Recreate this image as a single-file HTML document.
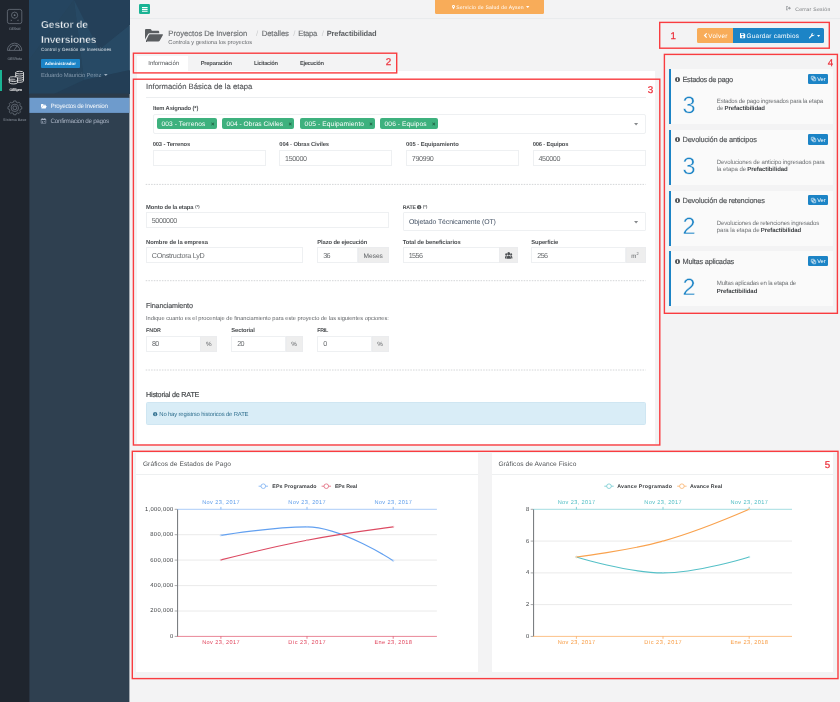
<!DOCTYPE html>
<html lang="es">
<head>
<meta charset="utf-8">
<title>Gestor de Inversiones</title>
<style>
*{box-sizing:border-box;margin:0;padding:0}
html,body{width:840px;height:702px;overflow:hidden}
body{text-rendering:geometricPrecision;font-family:"Liberation Sans",sans-serif;background:#f3f3f4;color:#676a6c;position:relative;font-size:6px;line-height:1}
.a{position:absolute}
.t{position:absolute;white-space:nowrap;line-height:1}
.rb{position:absolute;border:1px solid #ee3a43;border-radius:1px}
.inp{position:absolute;background:#fff;border:1px solid #eef0f2}
.add{position:absolute;background:#eeeeee;border:1px solid #ebecee}
.dash{position:absolute;height:0;border-top:1px dashed #e4e6e8}
.tag{position:absolute;background:#3eb17e;border-radius:2px}
svg{position:absolute;overflow:visible}
</style>
</head>
<body>
<div id="w" style="position:absolute;left:0;top:0;width:840px;height:702px;will-change:transform">
<svg style="left:0;top:0" width="131" height="702" viewBox="0 0 131 702"><rect x="29" y="0" width="100.400" height="702" fill="#2f4050"/><rect x="0" y="0" width="29.400" height="702" fill="#1f252e"/></svg>
<div class="a" style="left:0.00px;top:70.00px;width:2.00px;height:21.00px;background:#1ab394;"></div>
<svg style="left:0;top:0" width="30" height="130" viewBox="0 0 30 130" fill="none" stroke="#6f7781" stroke-width="0.75">
<rect x="7.4" y="9.4" width="14.4" height="14.2" rx="2"/>
<circle cx="14.6" cy="15.2" r="3.1"/><circle cx="14.6" cy="15.2" r="0.9" fill="#6f7781" stroke="none"/>
<path d="M10.8 19.4l1.3 .9-1.3 .9zM18.4 19.4l-1.3 .9 1.3 .9z" fill="#6f7781" stroke="none"/>
<!-- gauge -->
<path d="M7.4 50.4a7.2 7.2 0 0 1 14.4 0zM9.400 50.400a5.2 5.2 0 0 1 10.400 0M14.300 49.800l3.300-4.600" />
<path d="M10.4 46.2l.8 .9M12.6 44.6l.4 1M16.4 44.6l-.3 1M19 46.6l-.9 .8" stroke-width="0.55"/>
<!-- gear -->
<circle cx="14.85" cy="107.85" r="1.9"/><circle cx="14.85" cy="107.85" r="3.7"/>
<path d="M13.54 102.20L13.70 100.94L16.00 100.94L16.16 102.20L17.92 102.93L18.92 102.15L20.55 103.78L19.77 104.78L20.50 106.54L21.76 106.70L21.76 109.00L20.50 109.16L19.77 110.92L20.55 111.92L18.92 113.55L17.92 112.77L16.16 113.50L16.00 114.76L13.70 114.76L13.54 113.50L11.78 112.77L10.78 113.55L9.15 111.92L9.93 110.92L9.20 109.16L7.94 109.00L7.94 106.70L9.20 106.54L9.93 104.78L9.15 103.78L10.78 102.15L11.78 102.93z" stroke-width="0.7" stroke-linejoin="round"/>
</svg>
<svg style="left:0;top:0" width="30" height="130" viewBox="0 0 30 130" fill="none" stroke="#f4f4f4" stroke-width="0.8">
<ellipse cx="19.6" cy="72.6" rx="3.9" ry="1.3"/>
<path d="M15.7 72.6v8.4c0 .7 1.7 1.3 3.9 1.3s3.9-.6 3.9-1.3v-8.4M15.7 74.7c0 .7 1.7 1.3 3.9 1.3s3.9-.6 3.9-1.3M15.7 76.8c0 .7 1.7 1.3 3.9 1.3s3.9-.6 3.9-1.3M15.7 78.9c0 .7 1.7 1.3 3.9 1.3s3.9-.6 3.9-1.3"/>
<ellipse cx="13.4" cy="78" rx="4.1" ry="1.3" fill="#1f252e"/>
<path d="M9.3 78v4.6c0 .7 1.8 1.3 4.1 1.3s4.1-.6 4.1-1.3V78" fill="#1f252e"/>
<path d="M9.3 80.2c0 .7 1.8 1.3 4.1 1.3s4.1-.6 4.1-1.3"/>
<ellipse cx="11.8" cy="79.6" rx="3.6" ry="1.1" fill="#e8e8e8" stroke="none" opacity=".55"/>
</svg>
<div class="t" style="left:9.00px;top:28.00px;font-size:3.7px;color:#6f7781;letter-spacing:-0.332px;font-weight:bold;">GESsid</div>
<div class="t" style="left:7.45px;top:58.00px;font-size:3.7px;color:#6f7781;letter-spacing:-0.239px;font-weight:bold;">GESRota</div>
<div class="t" style="left:9.60px;top:89.00px;font-size:3.7px;color:#ffffff;letter-spacing:-0.275px;font-weight:bold;">GESpro</div>
<div class="t" style="left:3.00px;top:119.00px;font-size:3.7px;color:#6f7781;letter-spacing:-0.051px;font-weight:bold;">Sistema Base</div>
<div class="a" style="left:0;top:0;width:131px;height:99px">
<svg style="left:29.400px;top:0" width="100" height="93.6" viewBox="0 0 100 93.600"><rect x="0" y="0" width="100" height="93.600" fill="#26445c"/>
<polygon points="0,0 45,0 0,60" fill="#254560"/>
<polygon points="45,0 101,0 101,25 70,50" fill="#244059"/>
<polygon points="45,0 70,50 101,25 101,70 55,80" fill="#284b67" opacity=".8"/>
<polygon points="0,60 45,0 55,80 25,94 0,94" fill="#25445d"/>
<polygon points="55,80 101,70 101,94 25,94" fill="#233e56"/>
</svg></div>
<svg style="left:0;top:0" width="131" height="114" viewBox="0 0 131 114"><rect x="29.400" y="93.600" width="100" height="4.400" fill="#2b3b4a"/><rect x="29.400" y="97.800" width="100" height="15.100" fill="#6e9bcc"/></svg>
<div class="t" style="left:41.00px;top:21.00px;font-size:10.2px;color:#e9edf1;letter-spacing:-0.077px;font-weight:bold;-webkit-text-stroke:.3px #25455e;">Gestor de</div>
<div class="t" style="left:41.00px;top:36.00px;font-size:10.2px;color:#e9edf1;letter-spacing:-0.119px;font-weight:bold;-webkit-text-stroke:.3px #25455e;">Inversiones</div>
<div class="t" style="left:41.00px;top:48.00px;font-size:4.6px;color:#dde4ea;letter-spacing:0.121px;">Control y Gestión de Inversiones</div>
<div class="a" style="left:41.00px;top:59.00px;width:39.00px;height:9.00px;background:#1c84c6;border-radius:1px"></div>
<div class="t" style="left:44.80px;top:62.00px;font-size:4.4px;color:#ffffff;letter-spacing:0.094px;font-weight:bold;">Administrador</div>
<div class="t" style="left:41.00px;top:74.00px;font-size:5.9px;color:#8197ab;letter-spacing:-0.133px;">Eduardo Mauricio Perez</div>
<svg style="left:103.6px;top:74px" width="4" height="2.4" viewBox="0 0 4 2.4"><path d="M0 0h3.6L1.8 2z" fill="#9fb0c0"/></svg>
<svg style="left:41px;top:103.6px" width="6" height="5" viewBox="0 0 6 5"><path d="M0 .6c0-.3.2-.6.6-.6h1.4l.6.7h1.9c.3 0 .5.2.5.5v.5H1.6L0 4.2z" fill="#fff"/><path d="M1.7 2.1h4.1L4.6 4.6H.4z" fill="#fff"/></svg>
<svg style="left:41.2px;top:117.8px" width="5" height="5.6" viewBox="0 0 5 5.6"><path d="M.2 1h4.6v4.3H.2z" fill="none" stroke="#a7b1c2" stroke-width=".55"/><path d="M.2 1h4.6v1H.2z" fill="#a7b1c2"/><path d="M1.3 0v1.4M3.7 0v1.4" stroke="#a7b1c2" stroke-width=".6"/><path d="M1.2 3h.8v.7h-.8zM2.9 3h.8v.7h-.8zM1.2 4.1h.8v.6h-.8z" fill="#a7b1c2"/></svg>
<div class="t" style="left:50.60px;top:104.00px;font-size:6.3px;color:#f2f6fa;letter-spacing:-0.314px;">Proyectos de Inversion</div>
<div class="t" style="left:50.60px;top:119.00px;font-size:6.3px;color:#a7b1c2;letter-spacing:-0.314px;">Confirmacion de pagos</div>
<div class="a" style="left:130.00px;top:18.00px;width:710.00px;height:1.00px;background:#e9ebed;"></div>
<div class="a" style="left:138.60px;top:4.00px;width:11.80px;height:10.00px;background:#1ab394;border-radius:1.3px"></div>
<svg style="left:141.7px;top:6.6px" width="5.6" height="4.8" viewBox="0 0 5.6 4.8"><path d="M0 0h5.6v1.1H0zM0 1.85h5.6v1.1H0zM0 3.7h5.6v1.1H0z" fill="#fff"/></svg>
<div class="a" style="left:435.00px;top:0.00px;width:109.00px;height:13.50px;background:#f8ac59;border-radius:0 0 1.5px 1.5px"></div>
<svg style="left:451.8px;top:5px" width="3" height="4.4" viewBox="0 0 3 4.4"><path d="M1.5 0a1.5 1.5 0 0 1 1.5 1.5c0 1-1.5 2.9-1.5 2.9S0 2.500 0 1.5A1.5 1.5 0 0 1 1.500 0zm0 .9a.6.6 0 1 0 0 1.2.6.6 0 0 0 0-1.200z" fill="#fff"/></svg>
<div class="t" style="left:456.20px;top:6.00px;font-size:5.1px;color:#ffffff;letter-spacing:0.220px;">Servicio de Salud de Aysen</div>
<svg style="left:525.8px;top:6.3px" width="3.4" height="2" viewBox="0 0 3.4 2"><path d="M0 0h3.4L1.7 2z" fill="#fff"/></svg>
<svg style="left:785.6px;top:6.3px" width="5" height="4.400" viewBox="0 0 5 4.4"><path d="M0 .2h2v.7H.7v2.600H2v.7H0z" fill="#9a9da0"/><path d="M1.600 1.600h1.500V.6L5 2.200 3.100 3.800V2.800H1.600z" fill="#9a9da0"/></svg>
<div class="t" style="left:795.20px;top:8.00px;font-size:5.1px;color:#74777a;letter-spacing:0.311px;">Cerrar Sesión</div>
<svg style="left:145px;top:29.2px" width="18" height="12.6" viewBox="0 0 18 12.6"><path d="M0 1.300C0 .5.500 0 1.300 0h3.900c.5 0 .9.300 1.100.7l.5 1h6.100c.8 0 1.300.5 1.300 1.300v1.200H4.600c-.7 0-1.200.3-1.500.9L0 10.500z" fill="#5a5d60"/><path d="M4.800 5.300h12.500c.6 0 .8.400.5.900l-3.100 5.500c-.3.500-.8.800-1.400.8H1.600c-.6 0-.8-.4-.5-.9l2.700-5.500c.2-.5.500-.800 1-.800z" fill="#5a5d60"/></svg>
<div class="t" style="left:168.30px;top:30.00px;font-size:7.7px;color:#6c6f72;letter-spacing:-0.029px;-webkit-text-stroke:.15px #6c6f72;">Proyectos De Inversion</div>
<div class="t" style="left:256.00px;top:30.00px;font-size:7.7px;color:#c9cbcd;">/</div>
<div class="t" style="left:261.70px;top:30.00px;font-size:7.7px;color:#6c6f72;letter-spacing:-0.074px;-webkit-text-stroke:.15px #6c6f72;">Detalles</div>
<div class="t" style="left:293.30px;top:30.00px;font-size:7.7px;color:#c9cbcd;">/</div>
<div class="t" style="left:298.30px;top:30.00px;font-size:7.7px;color:#6c6f72;letter-spacing:-0.281px;-webkit-text-stroke:.15px #6c6f72;">Etapa</div>
<div class="t" style="left:321.70px;top:30.00px;font-size:7.7px;color:#c9cbcd;">/</div>
<div class="t" style="left:326.70px;top:30.00px;font-size:7.5px;color:#5d6063;letter-spacing:-0.120px;font-weight:bold;">Prefactibilidad</div>
<div class="t" style="left:168.30px;top:41.00px;font-size:5.7px;color:#686b6e;letter-spacing:-0.009px;">Controla y gestiona los proyectos</div>
<div class="t" style="left:670.57px;top:32.00px;font-size:9.8px;color:#ec2f3a;-webkit-text-stroke:.25px #ec2f3a;">1</div>
<div class="a" style="left:697.00px;top:27.80px;width:36.30px;height:15.20px;background:#f8ac59;border-radius:1.5px 0 0 1.5px"></div>
<div class="a" style="left:733.30px;top:27.80px;width:91.00px;height:15.20px;background:#1c84c6;border-radius:0 1.5px 1.5px 0"></div>
<svg style="left:703.6px;top:33px" width="3.200" height="5" viewBox="0 0 3.2 5"><path d="M2.700.3L.6 2.500l2.100 2.200" fill="none" stroke="#fff" stroke-width="1.25"/></svg>
<div class="t" style="left:708.30px;top:34.00px;font-size:6.3px;color:#ffffff;letter-spacing:0.298px;">Volver</div>
<svg style="left:739.6px;top:33px" width="5.200" height="5.2" viewBox="0 0 5.2 5.2"><path d="M0 .5C0 .2.200 0 .5 0h3.400l1.300 1.300v3.400c0 .3-.2.500-.5.500H.5c-.3 0-.5-.2-.5-.5zM1 .6v1.500h2.600V.6zM2.600 2.800a.95.950 0 1 0 0 1.900.95.950 0 0 0 0-1.900z" fill="#fff" fill-rule="evenodd"/></svg>
<div class="t" style="left:746.60px;top:34.00px;font-size:6.4px;color:#ffffff;letter-spacing:0.244px;">Guardar cambios</div>
<svg style="left:808.6px;top:32.8px" width="5.600" height="5.600" viewBox="0 0 5.6 5.6"><path d="M5.400 1.200a1.700 1.700 0 0 1-2.300 1.900L.9 5.300a.55.550 0 0 1-.8-.8l2.200-2.200A1.700 1.700 0 0 1 4.300.1L3.300 1.100l.3.900.9.300z" fill="#fff"/></svg>
<svg style="left:816.6px;top:34.8px" width="3.200" height="1.900" viewBox="0 0 3.2 1.9"><path d="M0 0h3.200L1.600 1.900z" fill="#fff"/></svg>
<div class="a" style="left:137.00px;top:55.70px;width:51.00px;height:15.20px;background:#ffffff;"></div>
<div class="t" style="left:148.30px;top:61.00px;font-size:6.0px;color:#505356;letter-spacing:-0.065px;">Información</div>
<div class="t" style="left:200.70px;top:62.00px;font-size:5.8px;color:#4d5053;letter-spacing:-0.223px;font-weight:bold;">Preparación</div>
<div class="t" style="left:254.00px;top:62.00px;font-size:5.8px;color:#4d5053;letter-spacing:-0.341px;font-weight:bold;">Licitación</div>
<div class="t" style="left:300.00px;top:62.00px;font-size:5.8px;color:#4d5053;letter-spacing:-0.425px;font-weight:bold;">Ejecución</div>
<div class="t" style="left:385.77px;top:58.00px;font-size:9.8px;color:#ec2f3a;-webkit-text-stroke:.25px #ec2f3a;">2</div>
<div class="a" style="left:137.00px;top:71.00px;width:518.30px;height:372.50px;background:#ffffff;"></div>
<div class="t" style="left:647.87px;top:86.00px;font-size:9.8px;color:#ec2f3a;-webkit-text-stroke:.25px #ec2f3a;">3</div>
<div class="t" style="left:146.00px;top:83.00px;font-size:7.7px;color:#505356;letter-spacing:0.027px;-webkit-text-stroke:.12px #505356;">Información Básica de la etapa</div>
<div class="a" style="left:146.00px;top:97.00px;width:499.70px;height:1.00px;background:#eceef0;"></div>
<div class="t" style="left:152.90px;top:107.00px;font-size:5.8px;color:#4a4d50;letter-spacing:-0.124px;font-weight:bold;">Item Asignado (*)</div>
<div class="inp" style="left:152.700px;top:114px;width:493px;height:20px;border-radius:2px"></div>
<div class="tag" style="left:156.90px;top:118.00px;width:60.00px;height:11.00px;"></div>
<div class="t" style="left:161.50px;top:122.00px;font-size:6.6px;color:#ffffff;letter-spacing:0.105px;">003 - Terrenos</div>
<div class="t" style="left:211.10px;top:122.00px;font-size:6px;color:#1f5a40;font-weight:bold;">×</div>
<div class="tag" style="left:222.00px;top:118.00px;width:72.30px;height:11.00px;"></div>
<div class="t" style="left:226.60px;top:122.00px;font-size:6.6px;color:#ffffff;letter-spacing:0.021px;">004 - Obras Civiles</div>
<div class="t" style="left:288.50px;top:122.00px;font-size:6px;color:#1f5a40;font-weight:bold;">×</div>
<div class="tag" style="left:300.00px;top:118.00px;width:75.00px;height:11.00px;"></div>
<div class="t" style="left:304.60px;top:122.00px;font-size:6.6px;color:#ffffff;letter-spacing:0.133px;">005 - Equipamiento</div>
<div class="t" style="left:369.20px;top:122.00px;font-size:6px;color:#1f5a40;font-weight:bold;">×</div>
<div class="tag" style="left:380.00px;top:118.00px;width:57.70px;height:11.00px;"></div>
<div class="t" style="left:384.60px;top:122.00px;font-size:6.6px;color:#ffffff;letter-spacing:0.106px;">006 - Equipos</div>
<div class="t" style="left:431.90px;top:122.00px;font-size:6px;color:#1f5a40;font-weight:bold;">×</div>
<svg style="left:634.3px;top:122.6px" width="4.200" height="2.400" viewBox="0 0 3.6 2.1"><path d="M0 0h3.600L1.800 2.100z" fill="#85888b"/></svg>
<div class="t" style="left:152.70px;top:143.00px;font-size:5.8px;color:#4a4d50;letter-spacing:-0.132px;font-weight:bold;">003 - Terrenos</div>
<div class="inp" style="left:152.7px;top:150px;width:113px;height:16px"></div>
<div class="t" style="left:279.30px;top:143.00px;font-size:5.8px;color:#4a4d50;letter-spacing:-0.123px;font-weight:bold;">004 - Obras Civiles</div>
<div class="inp" style="left:279.3px;top:150px;width:113px;height:16px"></div>
<div class="t" style="left:285.10px;top:155.00px;font-size:7.2px;color:#686b6e;letter-spacing:-0.405px;">150000</div>
<div class="t" style="left:406.00px;top:143.00px;font-size:5.8px;color:#4a4d50;letter-spacing:-0.028px;font-weight:bold;">005 - Equipamiento</div>
<div class="inp" style="left:406px;top:150px;width:113px;height:16px"></div>
<div class="t" style="left:411.80px;top:155.00px;font-size:7.2px;color:#686b6e;letter-spacing:-0.405px;">790990</div>
<div class="t" style="left:532.70px;top:143.00px;font-size:5.8px;color:#4a4d50;letter-spacing:-0.167px;font-weight:bold;">006 - Equipos</div>
<div class="inp" style="left:532.7px;top:150px;width:113px;height:16px"></div>
<div class="t" style="left:538.50px;top:155.00px;font-size:7.2px;color:#686b6e;letter-spacing:-0.405px;">450000</div>
<svg style="left:0;top:0" width="840" height="702" viewBox="0 0 840 702"><path d="M145.7 184.4H645.7" stroke="#d4d6d8" stroke-width="1" stroke-dasharray="1.55 1.15" fill="none"/></svg>
<div class="t" style="left:146.00px;top:206.00px;font-size:5.8px;color:#4a4d50;letter-spacing:-0.093px;font-weight:bold;">Monto de la etapa</div>
<div class="t" style="left:195.30px;top:205.00px;font-size:4px;color:#4a4d50;font-weight:bold;">(*)</div>
<div class="inp" style="left:146px;top:212px;width:242.700px;height:16px"></div>
<div class="t" style="left:151.80px;top:217.00px;font-size:7.2px;color:#686b6e;letter-spacing:-0.422px;">5000000</div>
<div class="t" style="left:402.70px;top:206.00px;font-size:5.2px;color:#4a4d50;letter-spacing:-0.123px;font-weight:bold;">RATE</div>
<svg style="left:417.4px;top:204.500px" width="4.300" height="4.300" viewBox="0 0 3.8 3.8"><circle cx="1.900" cy="1.900" r="1.900" fill="#4a4d50"/><path d="M1.550 1.600h.7v1.500h-.7zM1.550 .7h.7v.6h-.7z" fill="#fff"/></svg>
<div class="t" style="left:423.00px;top:205.00px;font-size:4px;color:#4a4d50;font-weight:bold;">(*)</div>
<div class="inp" style="left:402.7px;top:212px;width:243px;height:19px;border-radius:1px"></div>
<div class="t" style="left:409.00px;top:220.00px;font-size:6.9px;color:#414f62;letter-spacing:-0.089px;">Objetado Técnicamente (OT)</div>
<svg style="left:634.3px;top:221px" width="4.200" height="2.400" viewBox="0 0 3.6 2.1"><path d="M0 0h3.600L1.800 2.100z" fill="#85888b"/></svg>
<div class="t" style="left:146.00px;top:241.00px;font-size:5.8px;color:#4a4d50;letter-spacing:-0.011px;font-weight:bold;">Nombre de la empresa</div>
<div class="inp" style="left:146px;top:247px;width:157.300px;height:16px"></div>
<div class="t" style="left:151.80px;top:252.00px;font-size:7.2px;color:#686b6e;letter-spacing:-0.290px;">COnstructora LyD</div>
<div class="t" style="left:317.30px;top:241.00px;font-size:5.8px;color:#4a4d50;letter-spacing:-0.111px;font-weight:bold;">Plazo de ejecución</div>
<div class="inp" style="left:317.300px;top:247px;width:41px;height:16px"></div>
<div class="add" style="left:357.700px;top:247px;width:31px;height:16px"></div>
<div class="t" style="left:323.30px;top:252.00px;font-size:7.2px;color:#686b6e;letter-spacing:-0.709px;">36</div>
<div class="t" style="left:363.45px;top:254.00px;font-size:6.6px;color:#5c5f62;letter-spacing:0.015px;">Meses</div>
<div class="t" style="left:402.70px;top:241.00px;font-size:5.8px;color:#4a4d50;letter-spacing:-0.057px;font-weight:bold;">Total de beneficiarios</div>
<div class="inp" style="left:402.7px;top:247px;width:97.300px;height:16px"></div>
<div class="add" style="left:499.300px;top:247px;width:18.400px;height:16px"></div>
<div class="t" style="left:408.70px;top:252.00px;font-size:7.2px;color:#686b6e;letter-spacing:-0.573px;">1556</div>
<svg style="left:504.9px;top:251.800px" width="7.400" height="6.800" viewBox="0 0 7.2 5.4" preserveAspectRatio="none"><circle cx="3.600" cy="1.400" r="1.400" fill="#4d5053"/><path d="M1.300 5.400c0-1.500 1-2.400 2.300-2.400s2.300.9 2.300 2.400z" fill="#4d5053"/><circle cx="1.200" cy="1.900" r=".95" fill="#4d5053"/><circle cx="6" cy="1.900" r=".95" fill="#4d5053"/><path d="M0 4.600c0-1 .5-1.600 1.300-1.600.3 0 .5.100.7.200-.6.500-.9 1.100-1 1.900H0zM7.200 4.600c0-1-.5-1.600-1.300-1.600-.3 0-.5.100-.7.200.6.500.9 1.100 1 1.900h1z" fill="#4d5053"/></svg>
<div class="t" style="left:531.30px;top:241.00px;font-size:5.8px;color:#4a4d50;letter-spacing:-0.116px;font-weight:bold;">Superficie</div>
<div class="inp" style="left:531.300px;top:247px;width:95px;height:16px"></div>
<div class="add" style="left:625.7px;top:247px;width:20px;height:16px"></div>
<div class="t" style="left:537.30px;top:252.00px;font-size:7.2px;color:#686b6e;letter-spacing:-0.657px;">256</div>
<div class="t" style="left:631.20px;top:254.00px;font-size:6.2px;color:#5c5f62;">m</div>
<div class="t" style="left:636.50px;top:252.00px;font-size:4px;color:#5c5f62;">2</div>
<svg style="left:0;top:0" width="840" height="702" viewBox="0 0 840 702"><path d="M145.7 280.7H645.7" stroke="#d4d6d8" stroke-width="1" stroke-dasharray="1.55 1.15" fill="none"/></svg>
<div class="t" style="left:146.00px;top:302.00px;font-size:7.2px;color:#505356;letter-spacing:-0.141px;-webkit-text-stroke:.18px #505356;">Financiamiento</div>
<div class="t" style="left:146.00px;top:317.00px;font-size:5.7px;color:#606366;letter-spacing:-0.009px;">Indique cuanto es el procentaje de financiamiento para este proyecto de las siguientes opciones:</div>
<div class="t" style="left:146.00px;top:329.00px;font-size:5.4px;color:#4a4d50;letter-spacing:0.001px;font-weight:bold;">FNDR</div>
<div class="inp" style="left:146px;top:336px;width:55px;height:16px"></div>
<div class="add" style="left:200.2px;top:336px;width:17.2px;height:16px"></div>
<div class="t" style="left:152.00px;top:340.00px;font-size:7.2px;color:#686b6e;letter-spacing:-0.709px;">80</div>
<div class="t" style="left:206.00px;top:342.00px;font-size:6.3px;color:#5c5f62;">%</div>
<div class="t" style="left:231.30px;top:329.00px;font-size:5.8px;color:#4a4d50;letter-spacing:-0.125px;font-weight:bold;">Sectorial</div>
<div class="inp" style="left:231.3px;top:336px;width:55px;height:16px"></div>
<div class="add" style="left:285.5px;top:336px;width:17.2px;height:16px"></div>
<div class="t" style="left:237.30px;top:340.00px;font-size:7.2px;color:#686b6e;letter-spacing:-0.709px;">20</div>
<div class="t" style="left:291.30px;top:342.00px;font-size:6.3px;color:#5c5f62;">%</div>
<div class="t" style="left:317.30px;top:329.00px;font-size:5.4px;color:#4a4d50;letter-spacing:-0.332px;font-weight:bold;">FRIL</div>
<div class="inp" style="left:317.3px;top:336px;width:55px;height:16px"></div>
<div class="add" style="left:371.5px;top:336px;width:17.2px;height:16px"></div>
<div class="t" style="left:323.30px;top:340.00px;font-size:7.2px;color:#686b6e;">0</div>
<div class="t" style="left:377.30px;top:342.00px;font-size:6.3px;color:#5c5f62;">%</div>
<svg style="left:0;top:0" width="840" height="702" viewBox="0 0 840 702"><path d="M145.7 370.0H645.7" stroke="#d4d6d8" stroke-width="1" stroke-dasharray="1.55 1.15" fill="none"/></svg>
<div class="t" style="left:146.00px;top:391.00px;font-size:7.2px;color:#45484b;letter-spacing:-0.199px;-webkit-text-stroke:.18px #45484b;">Historial de RATE</div>
<div class="a" style="left:146.00px;top:402.30px;width:499.70px;height:22.40px;background:#d9edf7;border:1px solid #cfe6f2;border-radius:1.5px"></div>
<svg style="left:153.2px;top:411.900px" width="4.300" height="4.300" viewBox="0 0 3.8 3.8"><circle cx="1.900" cy="1.900" r="1.900" fill="#31708f"/><path d="M1.550 1.600h.7v1.500h-.7zM1.550 .7h.7v.6h-.7z" fill="#d9edf7"/></svg>
<div class="t" style="left:159.30px;top:413.00px;font-size:5.9px;color:#31708f;letter-spacing:-0.155px;">No hay registrso historicos de RATE</div>
<div class="t" style="left:827.87px;top:59.00px;font-size:9.8px;color:#ec2f3a;-webkit-text-stroke:.25px #ec2f3a;">4</div>
<div class="a" style="left:669.00px;top:69.00px;width:163.50px;height:55.00px;background:#fafafa;"></div>
<div class="a" style="left:669.00px;top:69.00px;width:1.70px;height:55.00px;background:#1c84c6;"></div>
<svg style="left:675.3px;top:76.60px" width="5" height="5" viewBox="0 0 4.6 4.6"><circle cx="2.300" cy="2.300" r="2.300" fill="#55585b"/><path d="M1.850 1.950h.9v1.800h-.9zM1.850 .8h.9v.8h-.9z" fill="#fafafa"/></svg>
<div class="t" style="left:682.50px;top:76.00px;font-size:7.4px;color:#505356;letter-spacing:-0.339px;-webkit-text-stroke:.15px #505356;">Estados de pago</div>
<div class="a" style="left:808.00px;top:73.60px;width:20.40px;height:10.30px;background:#1c84c6;border-radius:1.3px"></div>
<svg style="left:811.2px;top:76.20px" width="5" height="5" viewBox="0 0 5 5" fill="none" stroke="#fff" stroke-width=".6"><rect x=".3" y=".3" width="3" height="3" rx=".4"/><rect x="1.700" y="1.700" width="3" height="3" rx=".4"/></svg>
<div class="t" style="left:817.20px;top:78.00px;font-size:5.6px;color:#ffffff;letter-spacing:-0.003px;">Ver</div>
<div class="t" style="left:682.46px;top:94.00px;font-size:23.5px;color:#1c84c6;-webkit-text-stroke:.35px #fafafa;">3</div>
<div class="t" style="left:716.80px;top:99.00px;font-size:6.1px;color:#707376;letter-spacing:-0.208px;">Estados de pago ingresados para la etapa</div>
<div class="t" style="left:716.80px;top:106.00px;font-size:6.1px;color:#707376;letter-spacing:-0.127px;">de </div>
<div class="t" style="left:724.53px;top:106.00px;font-size:6px;color:#3f4245;letter-spacing:-0.060px;font-weight:bold;">Prefactibilidad</div>
<div class="a" style="left:669.00px;top:129.80px;width:163.50px;height:55.00px;background:#fafafa;"></div>
<div class="a" style="left:669.00px;top:129.80px;width:1.70px;height:55.00px;background:#1c84c6;"></div>
<svg style="left:675.3px;top:137.40px" width="5" height="5" viewBox="0 0 4.6 4.6"><circle cx="2.300" cy="2.300" r="2.300" fill="#55585b"/><path d="M1.850 1.950h.9v1.800h-.9zM1.850 .8h.9v.8h-.9z" fill="#fafafa"/></svg>
<div class="t" style="left:682.50px;top:136.00px;font-size:7.4px;color:#505356;letter-spacing:-0.166px;-webkit-text-stroke:.15px #505356;">Devolución de anticipos</div>
<div class="a" style="left:808.00px;top:134.40px;width:20.40px;height:10.30px;background:#1c84c6;border-radius:1.3px"></div>
<svg style="left:811.2px;top:137.00px" width="5" height="5" viewBox="0 0 5 5" fill="none" stroke="#fff" stroke-width=".6"><rect x=".3" y=".3" width="3" height="3" rx=".4"/><rect x="1.700" y="1.700" width="3" height="3" rx=".4"/></svg>
<div class="t" style="left:817.20px;top:139.00px;font-size:5.6px;color:#ffffff;letter-spacing:-0.003px;">Ver</div>
<div class="t" style="left:682.46px;top:155.00px;font-size:23.5px;color:#1c84c6;-webkit-text-stroke:.35px #fafafa;">3</div>
<div class="t" style="left:716.80px;top:160.00px;font-size:6.1px;color:#707376;letter-spacing:-0.135px;">Devoluciones de anticipo ingresados para</div>
<div class="t" style="left:716.80px;top:167.00px;font-size:6.1px;color:#707376;letter-spacing:-0.087px;">la etapa de </div>
<div class="t" style="left:747.23px;top:167.00px;font-size:6px;color:#3f4245;letter-spacing:-0.060px;font-weight:bold;">Prefactibilidad</div>
<div class="a" style="left:669.00px;top:190.60px;width:163.50px;height:55.00px;background:#fafafa;"></div>
<div class="a" style="left:669.00px;top:190.60px;width:1.70px;height:55.00px;background:#1c84c6;"></div>
<svg style="left:675.3px;top:198.20px" width="5" height="5" viewBox="0 0 4.6 4.6"><circle cx="2.300" cy="2.300" r="2.300" fill="#55585b"/><path d="M1.850 1.950h.9v1.800h-.9zM1.850 .8h.9v.8h-.9z" fill="#fafafa"/></svg>
<div class="t" style="left:682.50px;top:197.00px;font-size:7.4px;color:#505356;letter-spacing:-0.196px;-webkit-text-stroke:.15px #505356;">Devolución de retenciones</div>
<div class="a" style="left:808.00px;top:195.20px;width:20.40px;height:10.30px;background:#1c84c6;border-radius:1.3px"></div>
<svg style="left:811.2px;top:197.80px" width="5" height="5" viewBox="0 0 5 5" fill="none" stroke="#fff" stroke-width=".6"><rect x=".3" y=".3" width="3" height="3" rx=".4"/><rect x="1.700" y="1.700" width="3" height="3" rx=".4"/></svg>
<div class="t" style="left:817.20px;top:199.00px;font-size:5.6px;color:#ffffff;letter-spacing:-0.003px;">Ver</div>
<div class="t" style="left:682.46px;top:215.00px;font-size:23.5px;color:#1c84c6;-webkit-text-stroke:.35px #fafafa;">2</div>
<div class="t" style="left:716.80px;top:221.00px;font-size:6.1px;color:#707376;letter-spacing:-0.199px;">Devoluciones de retenciones ingresados</div>
<div class="t" style="left:716.80px;top:228.00px;font-size:6.1px;color:#707376;letter-spacing:-0.086px;">para la etapa de </div>
<div class="t" style="left:760.71px;top:228.00px;font-size:6px;color:#3f4245;letter-spacing:-0.060px;font-weight:bold;">Prefactibilidad</div>
<div class="a" style="left:669.00px;top:251.40px;width:163.50px;height:55.00px;background:#fafafa;"></div>
<div class="a" style="left:669.00px;top:251.40px;width:1.70px;height:55.00px;background:#1c84c6;"></div>
<svg style="left:675.3px;top:259.00px" width="5" height="5" viewBox="0 0 4.6 4.6"><circle cx="2.300" cy="2.300" r="2.300" fill="#55585b"/><path d="M1.850 1.950h.9v1.800h-.9zM1.850 .8h.9v.8h-.9z" fill="#fafafa"/></svg>
<div class="t" style="left:682.50px;top:258.00px;font-size:7.4px;color:#505356;letter-spacing:-0.221px;-webkit-text-stroke:.15px #505356;">Multas aplicadas</div>
<div class="a" style="left:808.00px;top:256.00px;width:20.40px;height:10.30px;background:#1c84c6;border-radius:1.3px"></div>
<svg style="left:811.2px;top:258.60px" width="5" height="5" viewBox="0 0 5 5" fill="none" stroke="#fff" stroke-width=".6"><rect x=".3" y=".3" width="3" height="3" rx=".4"/><rect x="1.700" y="1.700" width="3" height="3" rx=".4"/></svg>
<div class="t" style="left:817.20px;top:260.00px;font-size:5.6px;color:#ffffff;letter-spacing:-0.003px;">Ver</div>
<div class="t" style="left:682.46px;top:276.00px;font-size:23.5px;color:#1c84c6;-webkit-text-stroke:.35px #fafafa;">2</div>
<div class="t" style="left:716.80px;top:281.00px;font-size:6.1px;color:#707376;letter-spacing:-0.210px;">Multas aplicadas en la etapa de</div>
<div class="t" style="left:716.80px;top:289.00px;font-size:6px;color:#3f4245;letter-spacing:-0.060px;font-weight:bold;">Prefactibilidad</div>
<div class="a" style="left:136.00px;top:453.00px;width:342.00px;height:219.20px;background:#ffffff;"></div>
<div class="a" style="left:492.00px;top:453.00px;width:341.00px;height:219.20px;background:#ffffff;"></div>
<div class="a" style="left:136.00px;top:473.80px;width:342.00px;height:1.00px;background:#eef0f1;"></div>
<div class="a" style="left:492.00px;top:473.80px;width:341.00px;height:1.00px;background:#eef0f1;"></div>
<div class="t" style="left:142.90px;top:462.00px;font-size:6.6px;color:#505356;letter-spacing:0.083px;">Gráficos de Estados de Pago</div>
<div class="t" style="left:498.40px;top:462.00px;font-size:6.6px;color:#505356;letter-spacing:0.076px;">Gráficos de Avance Fisico</div>
<div class="t" style="left:824.77px;top:461.00px;font-size:9.8px;color:#ec2f3a;-webkit-text-stroke:.25px #ec2f3a;">5</div>
<svg style="left:0;top:0" width="840" height="702" viewBox="0 0 840 702" fill="none"><path d="M174.7 509.3H177.1" stroke="#6c6f72" stroke-width=".6"/><path d="M177.1 534.7H436.9" stroke="#e8e8e8" stroke-width=".9"/><path d="M174.7 534.7H177.1" stroke="#6c6f72" stroke-width=".6"/><path d="M177.1 560.1H436.9" stroke="#e8e8e8" stroke-width=".9"/><path d="M174.7 560.1H177.1" stroke="#6c6f72" stroke-width=".6"/><path d="M177.1 585.6H436.9" stroke="#e8e8e8" stroke-width=".9"/><path d="M174.7 585.6H177.1" stroke="#6c6f72" stroke-width=".6"/><path d="M177.1 611.0H436.9" stroke="#e8e8e8" stroke-width=".9"/><path d="M174.7 611.0H177.1" stroke="#6c6f72" stroke-width=".6"/><path d="M174.7 636.4H177.1" stroke="#6c6f72" stroke-width=".6"/><path d="M177.54999999999998 509.3V636.4" stroke="#7c7f82" stroke-width="1.1"/><path d="M177.1 509.3H436.9" stroke="#62a0f0" stroke-width=".9" opacity=".6"/><path d="M177.1 636.4H436.9" stroke="#dc4a62" stroke-width=".9" opacity=".75"/><path d="M220.9 506.90000000000003V509.3" stroke="#62a0f0" stroke-width=".7"/><path d="M220.9 636.4V638.8" stroke="#dc4a62" stroke-width=".7"/><path d="M307 506.90000000000003V509.3" stroke="#62a0f0" stroke-width=".7"/><path d="M307 636.4V638.8" stroke="#dc4a62" stroke-width=".7"/><path d="M393.2 506.90000000000003V509.3" stroke="#62a0f0" stroke-width=".7"/><path d="M393.2 636.4V638.8" stroke="#dc4a62" stroke-width=".7"/><path d="M220.9 535.4C220.9 535.4 272.6 526.9 307.0 526.9C341.5 526.9 393.2 560.7 393.2 560.7" stroke="#62a0f0" stroke-width="1.1"/><path d="M220.9 559.9C220.9 559.9 272.6 546.8 307.0 540.2C341.5 533.6 393.2 526.9 393.2 526.9" stroke="#dc4a62" stroke-width="1.1"/><circle cx="220.9" cy="535.4" r=".7" fill="#fff" stroke="#62a0f0" stroke-width=".35"/><circle cx="307.0" cy="526.9" r=".7" fill="#fff" stroke="#62a0f0" stroke-width=".35"/><circle cx="393.2" cy="560.7" r=".7" fill="#fff" stroke="#62a0f0" stroke-width=".35"/><circle cx="220.9" cy="559.9" r=".7" fill="#fff" stroke="#dc4a62" stroke-width=".35"/><circle cx="307.0" cy="540.2" r=".7" fill="#fff" stroke="#dc4a62" stroke-width=".35"/><circle cx="393.2" cy="526.9" r=".7" fill="#fff" stroke="#dc4a62" stroke-width=".35"/><path d="M258.6 486.2h9.400" stroke="#62a0f0" stroke-width=".7"/><circle cx="263.3" cy="486.2" r="2.300" fill="#fff" stroke="#62a0f0" stroke-width=".65"/><path d="M321.6 486.2h9.400" stroke="#dc4a62" stroke-width=".7"/><circle cx="326.3" cy="486.2" r="2.300" fill="#fff" stroke="#dc4a62" stroke-width=".65"/></svg>
<div class="t" style="left:144.92px;top:508.00px;font-size:5.8px;color:#3a3d40;letter-spacing:0.323px;">1,000,000</div>
<div class="t" style="left:150.24px;top:533.00px;font-size:5.8px;color:#3a3d40;letter-spacing:0.349px;">800,000</div>
<div class="t" style="left:150.24px;top:559.00px;font-size:5.8px;color:#3a3d40;letter-spacing:0.349px;">600,000</div>
<div class="t" style="left:150.24px;top:584.00px;font-size:5.8px;color:#3a3d40;letter-spacing:0.349px;">400,000</div>
<div class="t" style="left:150.24px;top:609.00px;font-size:5.8px;color:#3a3d40;letter-spacing:0.349px;">200,000</div>
<div class="t" style="left:170.07px;top:635.00px;font-size:5.8px;color:#3a3d40;">0</div>
<div class="t" style="left:272.30px;top:485.00px;font-size:5.3px;color:#3c3f42;letter-spacing:0.115px;font-weight:bold;">EPs Programado</div>
<div class="t" style="left:334.90px;top:485.00px;font-size:5.3px;color:#3c3f42;letter-spacing:-0.055px;font-weight:bold;">EPs Real</div>
<div class="t" style="left:202.15px;top:501.00px;font-size:5.6px;color:#5b9bea;letter-spacing:0.381px;">Nov 23, 2017</div>
<div class="t" style="left:288.25px;top:501.00px;font-size:5.6px;color:#5b9bea;letter-spacing:0.381px;">Nov 23, 2017</div>
<div class="t" style="left:374.45px;top:501.00px;font-size:5.6px;color:#5b9bea;letter-spacing:0.381px;">Nov 23, 2017</div>
<div class="t" style="left:202.15px;top:641.00px;font-size:5.6px;color:#e0425a;letter-spacing:0.381px;">Nov 23, 2017</div>
<div class="t" style="left:288.25px;top:641.00px;font-size:5.6px;color:#e0425a;letter-spacing:0.551px;">Dic 23, 2017</div>
<div class="t" style="left:374.45px;top:641.00px;font-size:5.6px;color:#e0425a;letter-spacing:0.380px;">Ene 23, 2018</div>
<svg style="left:0;top:0" width="840" height="702" viewBox="0 0 840 702" fill="none"><path d="M530.7 509.3H533.1" stroke="#6c6f72" stroke-width=".6"/><path d="M533.1 541.1H792" stroke="#e8e8e8" stroke-width=".9"/><path d="M530.7 541.1H533.1" stroke="#6c6f72" stroke-width=".6"/><path d="M533.1 572.9H792" stroke="#e8e8e8" stroke-width=".9"/><path d="M530.7 572.9H533.1" stroke="#6c6f72" stroke-width=".6"/><path d="M533.1 604.6H792" stroke="#e8e8e8" stroke-width=".9"/><path d="M530.7 604.6H533.1" stroke="#6c6f72" stroke-width=".6"/><path d="M530.7 636.4H533.1" stroke="#6c6f72" stroke-width=".6"/><path d="M533.5500000000001 509.3V636.4" stroke="#7c7f82" stroke-width="1.1"/><path d="M533.1 509.3H792" stroke="#55c0c7" stroke-width=".9" opacity=".6"/><path d="M533.1 636.4H792" stroke="#f9a24e" stroke-width=".9" opacity=".75"/><path d="M576.4 506.90000000000003V509.3" stroke="#55c0c7" stroke-width=".7"/><path d="M576.4 636.4V638.8" stroke="#f9a24e" stroke-width=".7"/><path d="M663 506.90000000000003V509.3" stroke="#55c0c7" stroke-width=".7"/><path d="M663 636.4V638.8" stroke="#f9a24e" stroke-width=".7"/><path d="M749.2 506.90000000000003V509.3" stroke="#55c0c7" stroke-width=".7"/><path d="M749.2 636.4V638.8" stroke="#f9a24e" stroke-width=".7"/><path d="M576.4 557.0C576.4 557.0 628.4 572.9 663.0 572.9C697.5 572.9 749.2 557.0 749.2 557.0" stroke="#55c0c7" stroke-width="1.1"/><path d="M576.4 557.0C576.4 557.0 628.4 550.6 663.0 541.1C697.5 531.6 749.2 509.3 749.2 509.3" stroke="#f9a24e" stroke-width="1.1"/><circle cx="576.4" cy="557.0" r=".7" fill="#fff" stroke="#55c0c7" stroke-width=".35"/><circle cx="663.0" cy="572.9" r=".7" fill="#fff" stroke="#55c0c7" stroke-width=".35"/><circle cx="749.2" cy="557.0" r=".7" fill="#fff" stroke="#55c0c7" stroke-width=".35"/><circle cx="576.4" cy="557.0" r=".7" fill="#fff" stroke="#f9a24e" stroke-width=".35"/><circle cx="663.0" cy="541.1" r=".7" fill="#fff" stroke="#f9a24e" stroke-width=".35"/><circle cx="749.2" cy="509.3" r=".7" fill="#fff" stroke="#f9a24e" stroke-width=".35"/><path d="M604.3 486.2h9.400" stroke="#55c0c7" stroke-width=".7"/><circle cx="609.0" cy="486.2" r="2.300" fill="#fff" stroke="#55c0c7" stroke-width=".65"/><path d="M677.2 486.2h9.400" stroke="#f9a24e" stroke-width=".7"/><circle cx="681.9000000000001" cy="486.2" r="2.300" fill="#fff" stroke="#f9a24e" stroke-width=".65"/></svg>
<div class="t" style="left:526.07px;top:508.00px;font-size:5.8px;color:#3a3d40;">8</div>
<div class="t" style="left:526.07px;top:540.00px;font-size:5.8px;color:#3a3d40;">6</div>
<div class="t" style="left:526.07px;top:571.00px;font-size:5.8px;color:#3a3d40;">4</div>
<div class="t" style="left:526.07px;top:603.00px;font-size:5.8px;color:#3a3d40;">2</div>
<div class="t" style="left:526.07px;top:635.00px;font-size:5.8px;color:#3a3d40;">0</div>
<div class="t" style="left:617.20px;top:485.00px;font-size:5.3px;color:#3c3f42;letter-spacing:0.216px;font-weight:bold;">Avance Programado</div>
<div class="t" style="left:690.00px;top:485.00px;font-size:5.3px;color:#3c3f42;letter-spacing:0.087px;font-weight:bold;">Avance Real</div>
<div class="t" style="left:557.65px;top:501.00px;font-size:5.6px;color:#4dbcc3;letter-spacing:0.381px;">Nov 23, 2017</div>
<div class="t" style="left:644.25px;top:501.00px;font-size:5.6px;color:#4dbcc3;letter-spacing:0.381px;">Nov 23, 2017</div>
<div class="t" style="left:730.45px;top:501.00px;font-size:5.6px;color:#4dbcc3;letter-spacing:0.381px;">Nov 23, 2017</div>
<div class="t" style="left:557.65px;top:641.00px;font-size:5.6px;color:#f79a40;letter-spacing:0.381px;">Nov 23, 2017</div>
<div class="t" style="left:644.25px;top:641.00px;font-size:5.6px;color:#f79a40;letter-spacing:0.551px;">Dic 23, 2017</div>
<div class="t" style="left:730.45px;top:641.00px;font-size:5.6px;color:#f79a40;letter-spacing:0.380px;">Ene 23, 2018</div>
<svg style="left:0;top:0" width="840" height="702" viewBox="0 0 840 702" fill="none" stroke="#f93c40" stroke-width="1.4"><rect x="659.7" y="22.4" width="169.60" height="25.80"/><rect x="133.4" y="53.2" width="263.30" height="19.70"/><rect x="133.4" y="79.2" width="526.40" height="365.80"/><rect x="664.4" y="54.4" width="173.00" height="258.90"/><rect x="132.3" y="451.3" width="705.70" height="227.30"/></svg>
</div>
</body>
</html>
